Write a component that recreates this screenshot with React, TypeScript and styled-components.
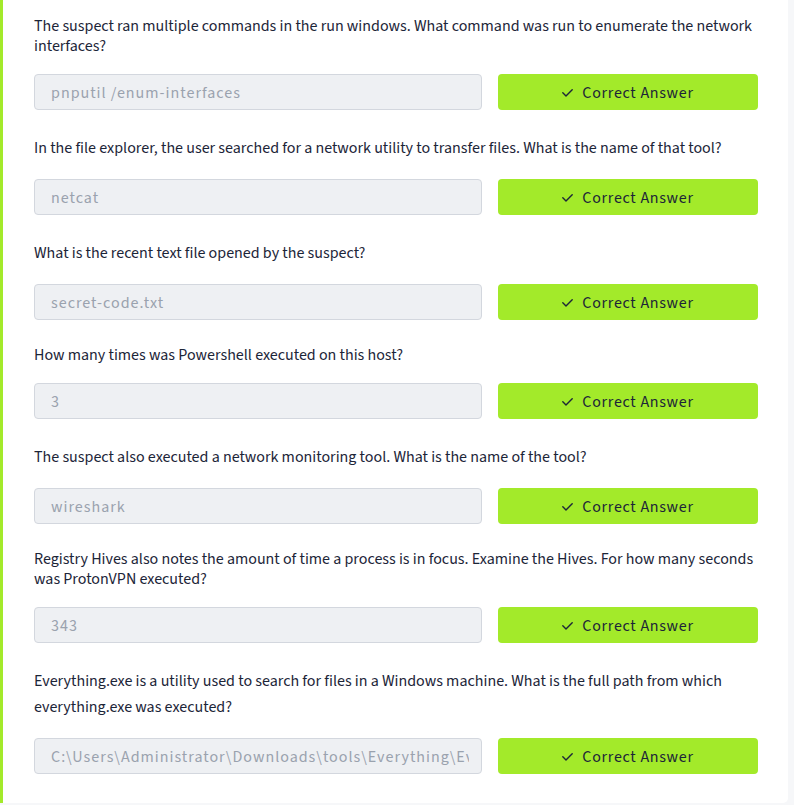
import React from "react";
import styled, { createGlobalStyle } from "styled-components";

const GlobalStyle = createGlobalStyle`
  html, body {
    margin: 0;
    padding: 0;
    background: #f6f7f9;
  }
  body {
    font-family: "Source Sans 3", "Lato", "Liberation Sans", sans-serif;
    color: #1c2538;
  }
  * { box-sizing: border-box; }
`;

const Page = styled.div`
  min-height: 805px;
  padding-right: 6px;
  background: #f6f7f9;
`;

const Card = styled.section`
  background: #ffffff;
  border-left: 3px solid #a3ea2a;
  border-radius: 0 0 5px 0;
  padding: 16px 30px 29px 31px;
  display: flex;
  flex-direction: column;
`;

const Question = styled.div`
  display: flex;
  flex-direction: column;
  & + & {
    margin-top: 25px;
  }
`;

const Label = styled.p<{ $lh: number }>`
  margin: 0 0 18px 0;
  font-size: 16px;
  line-height: ${(p) => p.$lh}px;
  color: #1c2538;
  font-weight: 400;
`;

const AnswerRow = styled.div`
  display: grid;
  grid-template-columns: 448px 260px;
  column-gap: 16px;
`;

const AnswerField = styled.input`
  height: 36px;
  width: 100%;
  margin: 0;
  padding: 2px 12px 0 16px;
  border: 1px solid #d3d7de;
  border-radius: 4px;
  background: #eef0f3;
  color: #9aa2ae;
  font-family: "Source Sans 3", "Lato", "Liberation Sans", sans-serif;
  font-size: 16px;
  letter-spacing: 1px;
  outline: none;
  &:disabled {
    opacity: 1;
    -webkit-text-fill-color: #9aa2ae;
  }
`;

const CorrectButton = styled.button`
  height: 36px;
  border: none;
  border-radius: 4px;
  background: #a3ea2a;
  color: #1c2538;
  font-family: "Source Sans 3", "Lato", "Liberation Sans", sans-serif;
  font-size: 16px;
  letter-spacing: 0.7px;
  display: flex;
  align-items: center;
  justify-content: center;
  gap: 9px;
  padding: 2px 0 0 0;
  cursor: default;
`;

const CheckIcon = () => (
  <svg width="11" height="8" viewBox="0 0 11 8" fill="none" aria-hidden="true">
    <polyline
      points="0.8,3.8 4,7 10.2,0.8"
      stroke="#1c2538"
      strokeWidth="1.4"
      strokeLinecap="round"
      strokeLinejoin="round"
    />
  </svg>
);

type Item = { q: string; a: string; lh: number };

const items: Item[] = [
  {
    q: "The suspect ran multiple commands in the run windows. What command was run to enumerate the network interfaces?",
    a: "pnputil /enum-interfaces",
    lh: 20,
  },
  {
    q: "In the file explorer, the user searched for a network utility to transfer files. What is the name of that tool?",
    a: "netcat",
    lh: 26,
  },
  { q: "What is the recent text file opened by the suspect?", a: "secret-code.txt", lh: 26 },
  { q: "How many times was Powershell executed on this host?", a: "3", lh: 20 },
  {
    q: "The suspect also executed a network monitoring tool. What is the name of the tool?",
    a: "wireshark",
    lh: 26,
  },
  {
    q: "Registry Hives also notes the amount of time a process is in focus. Examine the Hives. For how many seconds was ProtonVPN executed?",
    a: "343",
    lh: 20,
  },
  {
    q: "Everything.exe is a utility used to search for files in a Windows machine. What is the full path from which everything.exe was executed?",
    a: "C:\\Users\\Administrator\\Downloads\\tools\\Everything\\Everything.exe",
    lh: 26,
  },
];

export default function App() {
  return (
    <Page>
      <GlobalStyle />
      <Card>
        {items.map((it, i) => (
          <Question key={i}>
            <Label $lh={it.lh}>{it.q}</Label>
            <AnswerRow>
              <AnswerField type="text" value={it.a} readOnly disabled />
              <CorrectButton type="button">
                <CheckIcon />
                Correct Answer
              </CorrectButton>
            </AnswerRow>
          </Question>
        ))}
      </Card>
    </Page>
  );
}
